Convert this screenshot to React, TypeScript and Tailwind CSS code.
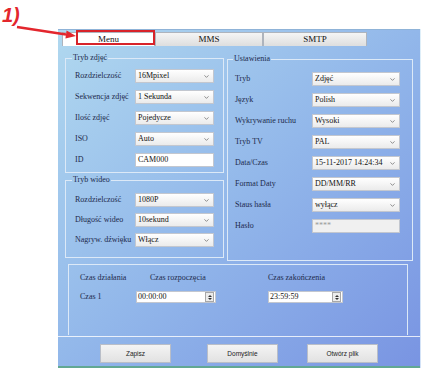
import { ChevronDown } from "lucide-react";
import type { ReactNode } from "react";

const serif = "font-['Liberation_Serif','Times_New_Roman',serif]";

function Select({ value, w }: { value: string; w: string }) {
  return (
    <div
      className={`${w} h-[14px] flex items-center justify-between border border-[#c3c7cf] bg-linear-to-b from-white to-[#ebebeb] pl-[2px] pr-[3px] text-[8px] leading-none text-[#111]`}
    >
      <span>{value}</span>
      <ChevronDown className="w-[7px] h-[7px] text-[#666]" strokeWidth={2.5} />
    </div>
  );
}

function TextBox({ value, w, muted }: { value: string; w: string; muted?: boolean }) {
  return (
    <div
      className={`${w} h-[14px] flex items-center border border-[#c3c7cf] pl-[2px] text-[8px] leading-none ${
        muted ? "bg-[#f0f0f0] text-[#999]" : "bg-white text-[#111]"
      }`}
    >
      {value}
    </div>
  );
}

function Row({ label, labelW, children }: { label: string; labelW: string; children: ReactNode }) {
  return (
    <div className="flex items-center h-[14px]">
      <span className={`${labelW} shrink-0 whitespace-nowrap text-[8px] leading-none text-[#1d2a4c]`}>{label}</span>
      {children}
    </div>
  );
}

function TimeBox({ value, w }: { value: string; w: string }) {
  return (
    <div className={`${w} h-[12px] flex items-center justify-between bg-white border border-[#c3c7cf] pl-[1px]`}>
      <span className="text-[8px] leading-none text-[#111]">{value}</span>
      <div className="w-[9px] h-[10px] mr-[1px] flex flex-col items-center justify-center gap-[1px] border border-[#a8a8a8] bg-[#ececec]">
        <div className="w-0 h-0 border-l-[2px] border-r-[2px] border-b-[2px] border-l-transparent border-r-transparent border-b-[#333]" />
        <div className="w-0 h-0 border-l-[2px] border-r-[2px] border-t-[2px] border-l-transparent border-r-transparent border-t-[#333]" />
      </div>
    </div>
  );
}

function Tab({ label, w, active }: { label: string; w: string; active?: boolean }) {
  return (
    <div
      className={`${w} h-[14px] flex items-center justify-center border border-b-0 border-[#aeb4bd] text-[9px] leading-none text-[#111] ${
        active ? "bg-white" : "bg-linear-to-b from-[#f5f5f5] to-[#dedede]"
      }`}
    >
      {label}
    </div>
  );
}

function Btn({ label }: { label: string }) {
  return (
    <div className="w-[71px] h-[19px] flex items-center justify-center border border-[#b9bec8] bg-linear-to-b from-[#f4f4f4] to-[#e2e2e2] font-['Liberation_Sans',Arial,sans-serif] text-[6.5px] text-[#222]">
      {label}
    </div>
  );
}

export default function App() {
  return (
    <div className={`relative w-[425px] h-[370px] bg-white overflow-hidden ${serif}`}>
      <div className="ml-[58px] mt-[29px] w-[363px] bg-linear-to-br from-[#b0d8ef] via-[#92b7ea] to-[#7994e2] border-r border-white/60">
        {/* tabs */}
        <div className="h-[16px] pt-[2px] pl-[4px] flex border-t border-[#8fb3d8]">
          <Tab label="Menu" w="w-[93px]" active />
          <Tab label="MMS" w="w-[108px]" />
          <Tab label="SMTP" w="w-[104px]" />
        </div>

        {/* panel */}
        <div className="h-[292px] border-b border-white/80 pt-[8px] pl-[7px]">
          <div className="flex gap-[6px]">
            <div className="w-[156px] flex flex-col gap-[2px]">
              <fieldset className="border border-[#dce9f7] px-[9px] pt-[6px] pb-[5px]">
                <legend className="ml-[-3px] px-[1px] text-[8px] leading-[10px] text-[#1d2a4c]">Tryb zdjęć</legend>
                <div className="flex flex-col gap-[7px]">
                  <Row label="Rozdzielczość" labelW="w-[60px]">
                    <Select value="16Mpixel" w="w-[79px]" />
                  </Row>
                  <Row label="Sekwencja zdjęć" labelW="w-[60px]">
                    <Select value="1 Sekunda" w="w-[79px]" />
                  </Row>
                  <Row label="Ilość zdjęć" labelW="w-[60px]">
                    <Select value="Pojedycze" w="w-[79px]" />
                  </Row>
                  <Row label="ISO" labelW="w-[60px]">
                    <Select value="Auto" w="w-[79px]" />
                  </Row>
                  <Row label="ID" labelW="w-[60px]">
                    <TextBox value="CAM000" w="w-[79px]" />
                  </Row>
                </div>
              </fieldset>
              <fieldset className="border border-[#dce9f7] px-[9px] pt-[8px] pb-[10px]">
                <legend className="ml-[-3px] px-[1px] text-[8px] leading-[10px] text-[#1d2a4c]">Tryb wideo</legend>
                <div className="flex flex-col gap-[6px]">
                  <Row label="Rozdzielczość" labelW="w-[60px]">
                    <Select value="1080P" w="w-[79px]" />
                  </Row>
                  <Row label="Długość wideo" labelW="w-[60px]">
                    <Select value="10sekund" w="w-[79px]" />
                  </Row>
                  <Row label="Nagryw. dźwięku" labelW="w-[60px]">
                    <Select value="Włącz" w="w-[79px]" />
                  </Row>
                </div>
              </fieldset>
            </div>

            <fieldset className="mt-[1px] w-[185px] border border-[#dce9f7] pl-[7px] pr-[12px] pt-[8px] pb-[27px]">
              <legend className="ml-[-2px] px-[1px] text-[8px] leading-[10px] text-[#1d2a4c]">Ustawienia</legend>
              <div className="flex flex-col gap-[7px]">
                <Row label="Tryb" labelW="w-[77px]">
                  <Select value="Zdjęć" w="w-[88px]" />
                </Row>
                <Row label="Język" labelW="w-[77px]">
                  <Select value="Polish" w="w-[88px]" />
                </Row>
                <Row label="Wykrywanie ruchu" labelW="w-[77px]">
                  <Select value="Wysoki" w="w-[88px]" />
                </Row>
                <Row label="Tryb TV" labelW="w-[77px]">
                  <Select value="PAL" w="w-[88px]" />
                </Row>
                <Row label="Data/Czas" labelW="w-[77px]">
                  <Select value="15-11-2017 14:24:34" w="w-[88px]" />
                </Row>
                <Row label="Format Daty" labelW="w-[77px]">
                  <Select value="DD/MM/RR" w="w-[88px]" />
                </Row>
                <Row label="Staus hasła" labelW="w-[77px]">
                  <Select value="wyłącz" w="w-[88px]" />
                </Row>
                <Row label="Hasło" labelW="w-[77px]">
                  <TextBox value="****" w="w-[88px]" muted />
                </Row>
              </div>
            </fieldset>
          </div>

          {/* time schedule */}
          <div className="ml-[3px] mt-[3px] w-[340px] h-[71px] border-t border-l border-r border-[#dce9f7] pl-[11px] pt-[8px] text-[8px] leading-[10px] text-[#1d2a4c]">
            <div className="flex">
              <span className="w-[70px]">Czas działania</span>
              <span className="w-[118px]">Czas rozpoczęcia</span>
              <span>Czas zakończenia</span>
            </div>
            <div className="flex items-center mt-[8px]">
              <span className="w-[56px]">Czas 1</span>
              <TimeBox value="00:00:00" w="w-[80px]" />
              <div className="w-[52px]" />
              <TimeBox value="23:59:59" w="w-[75px]" />
            </div>
          </div>
        </div>

        {/* buttons */}
        <div className="h-[29px] pt-[7px] pl-[42px] flex items-start">
          <Btn label="Zapisz" />
          <div className="w-[36px]" />
          <Btn label="Domyślnie" />
          <div className="w-[29px]" />
          <Btn label="Otwórz plik" />
        </div>
        <div className="h-[2px] bg-[#62a893]" />
      </div>

      {/* annotation */}
      <div className="absolute left-[2px] top-[5px] font-['Liberation_Sans',Arial,sans-serif] text-[20px] leading-none font-bold italic text-[#e3262d]">
        1)
      </div>
      <svg className="absolute left-0 top-0" width="100" height="50" viewBox="0 0 100 50">
        <line x1="17" y1="27" x2="66" y2="34.5" stroke="#e3262d" strokeWidth="2.5" />
        <polygon points="76,36 65.4,38.6 66.6,30.4" fill="#e3262d" />
      </svg>
      <div className="absolute left-[76px] top-[30px] w-[79px] h-[15px] border-2 border-[#d8232a]" />
    </div>
  );
}
